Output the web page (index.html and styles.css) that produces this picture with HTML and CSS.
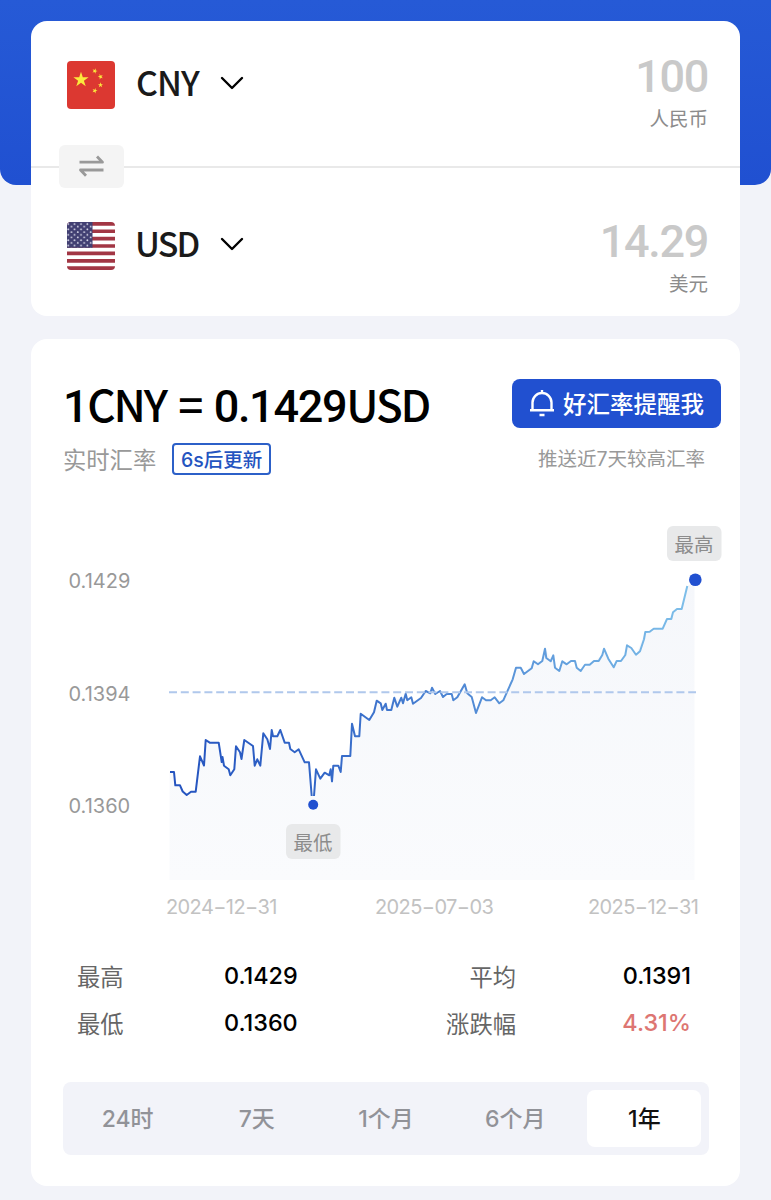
FILE: index.html
```
<!DOCTYPE html>
<html lang="zh-CN">
<head>
  <meta charset="UTF-8">
  <meta name="viewport" content="width=device-width, initial-scale=1.0">
  <title>汇率换算</title>
  <link rel="stylesheet" href="styles.css">
</head>
<body>
<div class="top-banner"></div>

<main class="content">
  <section class="card converter">
    <div class="currency-row">
      <div class="currency">
        <svg class="flag" viewBox="0 0 48 48">
          <defs>
            <path id="star" d="M0-1 .225-.309 .951-.309 .363.118 .588.809 0 .382-.588.809-.363.118-.951-.309-.225-.309Z"/>
          </defs>
          <rect width="48" height="48" rx="4" fill="#dc3831"/>
          <g fill="#fbe93d">
            <use href="#star" transform="translate(14 18.7) scale(8)"/>
            <use href="#star" transform="translate(27.8 10) rotate(20) scale(2.8)"/>
            <use href="#star" transform="translate(33.5 15.7) rotate(-20) scale(2.8)"/>
            <use href="#star" transform="translate(33.5 24) scale(2.8)"/>
            <use href="#star" transform="translate(27.8 29.7) rotate(20) scale(2.8)"/>
          </g>
        </svg>
        <span class="code">CNY</span>
        <svg class="chevron" viewBox="0 0 24 24"><path d="M2 7 12 17 22 7"/></svg>
      </div>
      <div class="amount">
        <div class="number">100</div>
        <div class="name">人民币</div>
      </div>
    </div>
    <div class="currency-row second">
      <div class="currency">
        <svg class="flag" viewBox="0 0 48 48">
          <defs>
            <clipPath id="flag-clip"><rect width="48" height="48" rx="4"/></clipPath>
            <pattern id="stars" width="6.4" height="5.4" patternUnits="userSpaceOnUse">
              <circle cx="1.2" cy="2" r=".9" fill="#dfdfee"/>
              <circle cx="4.4" cy="4.7" r=".9" fill="#dfdfee"/>
            </pattern>
          </defs>
          <g clip-path="url(#flag-clip)">
            <rect width="48" height="48" fill="#fff"/>
            <path stroke="#a23644" stroke-width="3.7" d="M0 1.85H48M0 9.23H48M0 16.61H48M0 24H48M0 31.4H48M0 38.8H48M0 46.15H48"/>
            <rect width="25.5" height="25.8" fill="#413f72"/>
            <rect width="25" height="25.3" fill="url(#stars)"/>
          </g>
        </svg>
        <span class="code">USD</span>
        <svg class="chevron" viewBox="0 0 24 24"><path d="M2 7 12 17 22 7"/></svg>
      </div>
      <div class="amount">
        <div class="number">14.29</div>
        <div class="name">美元</div>
      </div>
    </div>
    <button class="swap">
      <svg viewBox="0 0 26 24"><path d="M.5 8.2H23.5L18 2.5M24.5 16H1.5L7 21.7"/></svg>
    </button>
  </section>

  <section class="card rate">
    <div class="rate-head">
      <div class="rate-info">
        <h1><span class="digits">1</span>CNY = <span class="digits">0.1429</span>USD</h1>
        <div class="rate-sub">
          <span>实时汇率</span>
          <span class="refresh">6s后更新</span>
        </div>
      </div>
      <div class="remind">
        <button class="remind-btn">
          <svg viewBox="0 0 26 28"><path d="M13 1V4M3.5 20V13.5A9.5 9.5 0 0 1 22.5 13.5V20M1 21.2H25M10.5 26H15.5"/></svg>
          <span>好汇率提醒我</span>
        </button>
        <p>推送近7天较高汇率</p>
      </div>
    </div>

    <svg class="chart" viewBox="31 500 709 430">
      <defs>
        <linearGradient id="line-color" gradientUnits="userSpaceOnUse" x1="170" y1="0" x2="695" y2="0">
          <stop offset="0" stop-color="#2453bf"/>
          <stop offset=".3" stop-color="#3468c8"/>
          <stop offset="1" stop-color="#7fc0ea"/>
        </linearGradient>
        <linearGradient id="area-color" x1="0" y1="0" x2="0" y2="1">
          <stop offset="0" stop-color="#f5f7fb"/>
          <stop offset="1" stop-color="#fafbfd"/>
        </linearGradient>
      </defs>
      <path class="area" d="M169.5 772 174 772 175.3 785.3 180 785.3 182.7 791.5 186.7 795 191 791.7 195.7 791.7 200 756.3 204 765.5 205.7 740 209.7 742.7 218.7 742.7 221.7 762 228.7 769.3 230.3 775.3 234.3 769.3 236 746.3 241.5 759 244.3 740 253 746 254.7 765.7 257.3 759.3 260.3 765.7 263.3 733.3 270 749 271.7 730 277.3 736.3 280.3 730 284.7 742.7 294.7 752.3 298.7 749.3 304.7 762.3 309 762.3 311.7 795.5 314 795.5 316 769.3 320.3 778.7 332 781 333.3 765.7 340.7 772 342 756 350.3 756 352 723.7 355 736.3 359.3 736.3 360.7 713.7 369.3 720 376.7 700.7 387 710 394.3 697.7 413 703.7 425.7 691 453.3 700.3 464.7 684.3 476 713 482 697.3 499.3 703.3 503.3 700.3 516 667.7 524 674 533.7 661.3 542.3 661 545 648.7 559.3 671 562.3 661.3 580.7 671 602.3 655 604 648.7 613.7 667.3 625.3 655 627 645.3 636 654.7 645.3 632 662.7 628.7 673 612.3 681.7 609 687.3 586 694.5 582V880H169.5Z"/>
      <g class="line">
        <polyline points="170,772 174,772 175.3,785.3 180,785.3 182.7,791.5 186.7,795 191,791.7 195.7,791.7 200,756.3 204,765.5 205.7,740 209.7,742.7 218.7,742.7 221.7,762 222.5,757 224,765.7 228.7,769.3 230.3,775.3 234.3,769.3 236,746.3 240,752.3 241.5,759 244.3,740 253,746 254.7,765.7 257.3,759.3 260.3,765.7 263.3,733.3 267.3,739.3 270,749 271.7,730 273,736.3 277.3,736.3 280.3,730 284.7,742.7 289,742.7 290.3,749 294.7,752.3 298.7,749.3 304.7,762.3 309,762.3 311.7,796"/>
        <polyline points="314,796 316,769.3 320.3,778.7 324.7,772.7 329.3,775.3 330.7,769.3 332,781.3 333.3,765.7 338.3,765.7 340.7,772 342,756 350.3,756 352,723.7 355,736.3 359.3,736.3 360.7,713.7 369.3,720 374,712.3 376.7,700.7 380.7,703.3 382.3,710 385.7,703.7 387,710 391.3,710 394.3,697.7 397.3,706.7 401.3,697.7 403,703.3 405.7,693.7 407.3,700.3 411.3,697.3 413,703.7 421,698 425.7,691 430.3,693.3 432,687.7 435.3,694 440,691 443,697 446.7,694 451.7,694 453.3,700.3 457.3,697.3 464.7,684.3 467.3,693.3 471.7,697 476,713 482,697.3 486,700.3 490.7,700.3 494.7,697.3 499.3,703.3 503.3,700.3 512.7,679.3 516,667.7 520.7,667.7 524,674 531.7,668.3 533.7,661.3 538,664.3 542.3,661 545,648.7 546.3,658 550.7,661.3 553.3,655.3 555,667.7 559.3,671 562.3,661.3 566.7,664.3 571,661 575,661 576.7,667.7 580.7,671 585,664.7 589.7,664.7 594,661 598.7,661 602.3,655 604,648.7 608.3,658.7 613.7,667.3 616.7,661 621,661 625.3,655 627,645.3 631.3,648 636,654.7 640,651.3 644,639.3 645.3,632 649.7,631.7 653.7,628.7 662.7,628.7 667,619 671.3,619 673,612.3 677,609 681.7,609 687.3,586"/>
      </g>
      <path class="average" d="M169 692.3H696"/>
      <g class="axis-y">
        <text x="68.5" y="587.5">0.1429</text>
        <text x="68.5" y="700.5">0.1394</text>
        <text x="68.5" y="813">0.1360</text>
      </g>
      <g class="axis-x">
        <text x="166" y="913.5">2024−12−31</text>
        <text x="375" y="913.5">2025−07−03</text>
        <text x="588" y="913.5">2025−12−31</text>
      </g>
      <circle class="dot" cx="695.3" cy="579.7" r="6.3"/>
      <circle class="dot" cx="313.2" cy="804.8" r="5"/>
      <g class="tag">
        <rect x="667" y="526" width="54.5" height="35" rx="6"/>
        <text x="694" y="551.5">最高</text>
        <rect x="286" y="824" width="54.5" height="35" rx="6"/>
        <text x="313" y="849.5">最低</text>
      </g>
    </svg>

    <dl class="stats">
      <dt>最高</dt><dd>0.1429</dd>
      <dt class="right">平均</dt><dd class="right">0.1391</dd>
      <dt>最低</dt><dd>0.1360</dd>
      <dt class="right">涨跌幅</dt><dd class="right up">4.31%</dd>
    </dl>

    <div class="tabs">
      <button>24时</button>
      <button>7天</button>
      <button>1个月</button>
      <button>6个月</button>
      <button class="active">1年</button>
    </div>
  </section>
</main>
</body>
</html>
```
FILE: styles.css
```
* {
  margin: 0;
  padding: 0;
  box-sizing: border-box;
}

body {
  background-color: #f2f3f9;
  font-family: Inter, "Noto Sans CJK SC", sans-serif;
  color: #000;
}

button {
  border: none;
  background: none;
  font-family: inherit;
}

.top-banner {
  height: 185px;
  margin-bottom: -164px;
  border-radius: 0 0 16px 16px;
  background: linear-gradient(#265ad6, #2050d1);
}

.content {
  display: flex;
  flex-direction: column;
  gap: 23px;
  padding: 0 31px 14px;
}

.card {
  position: relative;
  background-color: #fff;
  border-radius: 16px;
}

/* converter */
.converter {
  height: 295px;
}

.currency-row {
  display: flex;
  justify-content: space-between;
  height: 147px;
  padding: 32px 32px 0 36px;
  border-bottom: 2px solid #e9e9e9;
}

.currency-row.second {
  height: 148px;
  padding-top: 50px;
  border-bottom: none;
}

.currency {
  display: flex;
  align-items: center;
  height: 62px;
  padding-top: 2px;
}

.second .currency {
  padding-top: 0;
  height: 56px;
}

.flag {
  width: 48px;
  height: 48px;
}

.code {
  width: 65px;
  margin: 0 19px 6px 21px;
  font-family: "Noto Sans CJK SC", sans-serif;
  font-size: 34px;
  line-height: 48px;
  font-weight: 500;
  letter-spacing: -1px;
  color: #1a1a1a;
  white-space: nowrap;
}

.second .code {
  margin-left: 20px;
  margin-right: 20px;
  letter-spacing: -1.8px;
}

.chevron {
  width: 24px;
  height: 24px;
  margin-bottom: 4px;
  fill: none;
  stroke: #000;
  stroke-width: 2.4;
  stroke-linecap: round;
  stroke-linejoin: round;
}

.amount {
  text-align: right;
}

.number {
  font-family: Roboto, sans-serif;
  font-size: 45px;
  line-height: 48px;
  font-weight: 500;
  letter-spacing: -1.3px;
  color: #c9c9c9;
}

.name {
  font-size: 19.5px;
  line-height: 36px;
  color: #8c8c8c;
}

.swap {
  position: absolute;
  left: 28px;
  top: 124px;
  width: 65px;
  height: 43px;
  padding-top: 2px;
  border-radius: 6px;
  background-color: #f4f4f4;
}

.swap svg {
  width: 26px;
  height: 24px;
  fill: none;
  stroke: #999;
  stroke-width: 2.8;
  stroke-linejoin: round;
}

/* rate card */
.rate {
  height: 847px;
}

.rate-head {
  display: flex;
  justify-content: space-between;
  height: 161px;
  padding: 40px 19px 0 32px;
}

h1 {
  height: 60px;
  font-family: "Noto Sans CJK SC", sans-serif;
  font-size: 44px;
  line-height: 48px;
  font-weight: 500;
  letter-spacing: -2.1px;
  word-spacing: 4.5px;
  white-space: nowrap;
}

h1 .digits {
  font-family: Roboto, sans-serif;
  font-size: 45px;
  letter-spacing: -1.3px;
}

.rate-sub {
  display: flex;
  align-items: center;
  gap: 16px;
  height: 40px;
  font-size: 23.3px;
  color: #999;
}

.refresh {
  width: 99px;
  height: 32px;
  border: 2px solid #2c60c8;
  border-radius: 4px;
  font-size: 19.5px;
  line-height: 30px;
  font-weight: 500;
  text-align: center;
  color: #2454c0;
  white-space: nowrap;
}

.remind-btn {
  display: flex;
  align-items: center;
  gap: 8px;
  width: 209px;
  height: 49px;
  padding: 0 0 2px 17px;
  border-radius: 8px;
  background-color: #2150d0;
  font-size: 23.5px;
  font-weight: 500;
  color: #fff;
  white-space: nowrap;
}

.remind-btn svg {
  width: 26px;
  height: 28px;
  fill: none;
  stroke: #fff;
  stroke-width: 2.4;
}

.remind p {
  padding-right: 16px;
  font-size: 19.5px;
  line-height: 62px;
  text-align: right;
  color: #999;
}

/* chart */
.chart {
  display: block;
  width: 709px;
  height: 430px;
}

.chart text {
  font-size: 20px;
}

.area {
  fill: url(#area-color);
}

.line {
  fill: none;
  stroke: url(#line-color);
  stroke-width: 2;
  stroke-linejoin: round;
}

.average {
  stroke: #b0c8ec;
  stroke-width: 2;
  stroke-dasharray: 8 3.8;
}

.axis-y {
  fill: #999;
}

.axis-x {
  fill: #c2c2c2;
  letter-spacing: -0.6px;
}

.dot {
  fill: #2150d0;
}

.tag rect {
  fill: #e8e9ea;
}

.chart .tag text {
  font-size: 19.5px;
  text-anchor: middle;
  fill: #8c8c8c;
}

/* stats */
.stats {
  display: grid;
  grid-template-columns: 147px 110px 182px 175px;
  grid-auto-rows: 47px;
  align-items: center;
  padding: 22px 0 0 46px;
}

.stats dt {
  font-size: 23.3px;
  color: #666;
}

.stats dd {
  font-size: 23.4px;
  font-weight: 500;
}

.stats .right {
  text-align: right;
}

.stats .up {
  color: #dd7672;
}

/* period tabs */
.tabs {
  display: grid;
  grid-template-columns: repeat(5, 1fr);
  width: 646px;
  height: 73px;
  margin: 36px 0 0 32px;
  border-radius: 8px;
  background-color: #f2f3f9;
}

.tabs button {
  margin: 8px 7.5px;
  padding-bottom: 4px;
  border-radius: 8px;
  font-size: 23px;
  font-weight: 500;
  color: #919298;
}

.tabs .active {
  background-color: #fff;
  color: #111;
}
```
